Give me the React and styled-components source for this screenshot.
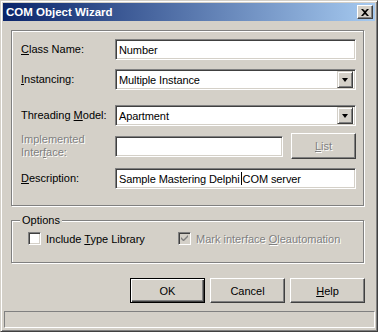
import React from 'react';
import styled, { createGlobalStyle } from 'styled-components';

const GlobalStyle = createGlobalStyle`
  html, body { margin: 0; padding: 0; background: #d4d0c8; }
  body { font-family: 'Liberation Sans', Arial, sans-serif; font-size: 11px; color: #000; }
`;

const Window = styled.div`
  width: 378px;
  height: 332px;
  box-sizing: border-box;
  background: #d4d0c8;
  border-top: 1px solid #d4d0c8;
  border-left: 1px solid #d4d0c8;
  border-right: 1px solid #404040;
  border-bottom: 1px solid #404040;
  box-shadow: inset 1px 1px 0 #fff, inset -1px -1px 0 #808080;
  padding: 2px;
  display: flex;
  flex-direction: column;
`;

const TitleBar = styled.div`
  height: 18px;
  flex: none;
  display: flex;
  align-items: center;
  justify-content: space-between;
  padding: 0 2px 0 3px;
  background: linear-gradient(to right, #0a246a, #a6caf0);
  color: #fff;
  font-family: 'Liberation Sans', Arial, sans-serif;
  font-weight: bold;
  font-size: 11.5px;
`;

const CloseButton = styled.div`
  width: 16px;
  height: 14px;
  box-sizing: border-box;
  background: #d4d0c8;
  border-top: 1px solid #fff;
  border-left: 1px solid #fff;
  border-right: 1px solid #404040;
  border-bottom: 1px solid #404040;
  box-shadow: inset -1px -1px 0 #808080;
  display: flex;
  align-items: center;
  justify-content: center;
`;

const Body = styled.div`
  flex: 1;
  display: flex;
  flex-direction: column;
  padding: 9px 9px 0 8px;
`;

const GroupBox = styled.div`
  position: relative;
  box-sizing: border-box;
  height: ${p => p.$height}px;
  margin-top: ${p => p.$top || 0}px;
  border: 1px solid #808080;
  box-shadow: inset 1px 1px 0 #fff, 1px 1px 0 #fff;
  margin-right: 2px;
  padding: ${p => p.$pad};
`;

const Legend = styled.span`
  position: absolute;
  top: -7px;
  left: 8px;
  padding: 0 2px;
  background: #d4d0c8;
  line-height: 13px;
`;

const Row = styled.div`
  display: grid;
  grid-template-columns: 94px 1fr ${p => (p.$side ? '8px 65px' : '')};
  align-items: center;
  margin-top: ${p => p.$top}px;
  height: ${p => p.$h || 21}px;
`;

const Label = styled.label`
  line-height: 13px;
  color: ${p => (p.$disabled ? '#808080' : '#000')};
  text-shadow: ${p => (p.$disabled ? '1px 1px 0 #fff' : 'none')};
`;

const Field = styled.div`
  height: 21px;
  box-sizing: border-box;
  background: #fff;
  border-top: 1px solid #808080;
  border-left: 1px solid #808080;
  border-right: 1px solid #fff;
  border-bottom: 1px solid #fff;
  box-shadow: inset 1px 1px 0 #404040, inset -1px -1px 0 #d4d0c8;
  display: flex;
  align-items: center;
  padding: 0 2px 0 3px;
  white-space: nowrap;
  overflow: hidden;
  letter-spacing: -0.1px;
`;

const FieldText = styled.span`
  flex: 1;
`;

const Caret = styled.span`
  display: inline-block;
  width: 1px;
  height: 13px;
  background: #000;
  vertical-align: -3px;
  margin: 0 1px;
`;

const DropButton = styled.div`
  width: 16px;
  height: 17px;
  box-sizing: border-box;
  flex: none;
  background: #d4d0c8;
  border-top: 1px solid #d4d0c8;
  border-left: 1px solid #d4d0c8;
  border-right: 1px solid #404040;
  border-bottom: 1px solid #404040;
  box-shadow: inset 1px 1px 0 #fff, inset -1px -1px 0 #808080;
  display: flex;
  align-items: center;
  justify-content: center;
`;

const Arrow = styled.div`
  width: 0;
  height: 0;
  border-left: 3.5px solid transparent;
  border-right: 3.5px solid transparent;
  border-top: 4px solid #000;
  margin-top: 1px;
`;

const Button = styled.div`
  box-sizing: border-box;
  width: ${p => p.$w || 75}px;
  height: ${p => p.$h || 25}px;
  background: #d4d0c8;
  display: flex;
  align-items: center;
  justify-content: center;
  border-top: 1px solid #fff;
  border-left: 1px solid #fff;
  border-right: 1px solid #404040;
  border-bottom: 1px solid #404040;
  box-shadow: inset -1px -1px 0 #808080;
  color: ${p => (p.$disabled ? '#808080' : '#000')};
  text-shadow: ${p => (p.$disabled ? '1px 1px 0 #fff' : 'none')};
  ${p => p.$default && `
    border: 1px solid #000;
    box-shadow: inset 1px 1px 0 #fff, inset -1px -1px 0 #404040, inset -2px -2px 0 #808080;
  `}
`;

const Options = styled.div`
  display: flex;
  align-items: center;
  margin-top: 11px;
  padding-left: 16px;
`;

const Check = styled.label`
  display: flex;
  align-items: center;
  gap: 5px;
  width: ${p => p.$w}px;
  color: ${p => (p.$disabled ? '#808080' : '#000')};
  text-shadow: ${p => (p.$disabled ? '1px 1px 0 #fff' : 'none')};
`;

const Box = styled.span`
  width: 13px;
  height: 13px;
  box-sizing: border-box;
  flex: none;
  background: ${p => (p.$disabled ? '#d4d0c8' : '#fff')};
  border-top: 1px solid #808080;
  border-left: 1px solid #808080;
  border-right: 1px solid #fff;
  border-bottom: 1px solid #fff;
  box-shadow: inset 1px 1px 0 #404040, inset -1px -1px 0 #d4d0c8;
  display: flex;
  align-items: center;
  justify-content: center;
  text-shadow: none;
`;

const ButtonRow = styled.div`
  display: flex;
  justify-content: flex-end;
  gap: 5px;
  margin-top: 15px;
  margin-right: 1px;
`;

const StatusBar = styled.div`
  height: 17px;
  flex: none;
  box-sizing: border-box;
  margin: 0 0 1px 1px;
  border-top: 1px solid #808080;
  border-left: 1px solid #808080;
  border-right: 1px solid #fff;
  border-bottom: 1px solid #fff;
`;

const U = styled.u`
  text-decoration: underline;
  text-underline-offset: 1px;
`;

function Select({ value }) {
  return (
    <Field style={{ paddingRight: 2 }}>
      <FieldText>{value}</FieldText>
      <DropButton><Arrow /></DropButton>
    </Field>
  );
}

export default function App() {
  return (
    <>
      <GlobalStyle />
      <Window>
        <TitleBar>
          <span>COM Object Wizard</span>
          <CloseButton>
            <svg width="8" height="7" viewBox="0 0 8 7">
              <path d="M0 0h2l2 2 2-2h2L5 3.5 8 7H6L4 5 2 7H0l3-3.5z" fill="#000" />
            </svg>
          </CloseButton>
        </TitleBar>
        <Body>
          <GroupBox $height={176} $pad="0 7px 0 9px">
            <Row $top={8}>
              <Label><U>C</U>lass Name:</Label>
              <Field>Number</Field>
            </Row>
            <Row $top={9}>
              <Label><U>I</U>nstancing:</Label>
              <Select value="Multiple Instance" />
            </Row>
            <Row $top={15}>
              <Label>Threading <U>M</U>odel:</Label>
              <Select value="Apartment" />
            </Row>
            <Row $top={7} $h={26} $side>
              <Label $disabled>Implemented<br />Inter<U>f</U>ace:</Label>
              <Field />
              <span />
              <Button $w={65} $h={26} $disabled><U>L</U>ist</Button>
            </Row>
            <Row $top={9}>
              <Label><U>D</U>escription:</Label>
              <Field>Sample Mastering Delphi<Caret />COM server</Field>
            </Row>
          </GroupBox>
          <GroupBox $height={43} $top={14} $pad="0">
            <Legend>Options</Legend>
            <Options>
              <Check $w={150}>
                <Box />
                <span>Include <U>T</U>ype Library</span>
              </Check>
              <Check $disabled>
                <Box $disabled>
                  <svg width="7" height="7" viewBox="0 0 7 7">
                    <path d="M0 2v2l2 2h1l4-4V0L2.5 4.5z" fill="#808080" />
                  </svg>
                </Box>
                <span>Mark interface <U>O</U>leautomation</span>
              </Check>
            </Options>
          </GroupBox>
          <ButtonRow>
            <Button $default>OK</Button>
            <Button>Cancel</Button>
            <Button><U>H</U>elp</Button>
          </ButtonRow>
        </Body>
        <StatusBar />
      </Window>
    </>
  );
}
